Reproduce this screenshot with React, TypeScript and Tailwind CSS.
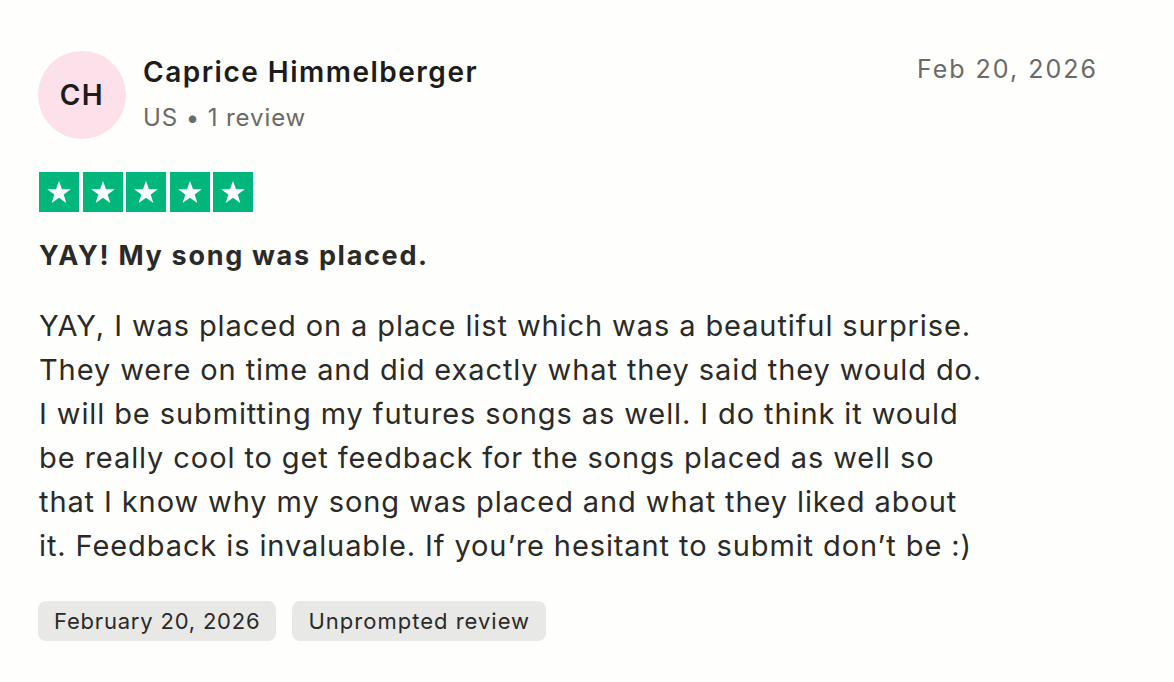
import React from "react";

const Star = () => (
  <div className="w-[40px] h-[40px] bg-[#00b67a] flex items-center justify-center">
    <svg viewBox="0 0 24 24" className="w-[28px] h-[28px]" fill="#fff">
      <path d="M12 2.5l2.6 7.1h7.5l-6.1 4.5 2.3 7.3L12 16.9l-6.3 4.5 2.3-7.3-6.1-4.5h7.5z" />
    </svg>
  </div>
);

const lines = [
  "YAY, I was placed on a place list which was a beautiful surprise.",
  "They were on time and did exactly what they said they would do.",
  "I will be submitting my futures songs as well. I do think it would",
  "be really cool to get feedback for the songs placed as well so",
  "that I know why my song was placed and what they liked about",
  "it. Feedback is invaluable. If you\u2019re hesitant to submit don\u2019t be :)",
];

export default function App() {
  return (
    <div
      className="w-[1174px] h-[682px] bg-[#fefefd] text-[#2a2a28] px-[38px] pt-[51px]"
      style={{ fontFamily: "Inter, 'Liberation Sans', sans-serif" }}
    >
      <div className="flex items-start justify-between">
        <div className="flex items-center gap-[17px]">
          <div className="w-[88px] h-[88px] rounded-full bg-[#fde1ea] flex items-center justify-center text-[28px] font-semibold tracking-[1.5px] text-[#1c1c1c]">
            CH
          </div>
          <div className="flex flex-col">
            <div className="text-[28px] font-semibold leading-[34px] tracking-[1.5px] text-[#1c1c1c]">
              Caprice Himmelberger
            </div>
            <div className="text-[24px] leading-[36px] tracking-[0.9px] text-[#6b6a66] mt-[11px]">
              US • 1 review
            </div>
          </div>
        </div>
        <div className="text-[25px] leading-[36px] text-[#6b6a66] tracking-[2px] mr-[38px]">
          Feb 20, 2026
        </div>
      </div>

      <div className="flex gap-[3.5px] mt-[33px] ml-[1px]">
        <Star />
        <Star />
        <Star />
        <Star />
        <Star />
      </div>

      <div className="mt-[24px] ml-[1px] text-[27px] font-bold leading-[40px] tracking-[1.7px] text-[#2a2a28]">
        YAY! My song was placed.
      </div>

      <div className="mt-[28px] ml-[1px] text-[29px] leading-[44px] tracking-[0.9px] text-[#2a2a28]">
        {lines.map((l, i) => (
          <div key={i} className="whitespace-nowrap">
            {l}
          </div>
        ))}
      </div>

      <div className="flex gap-[16px] mt-[33px]">
        <div className="h-[40px] px-[16px] rounded-[8px] bg-[#e8e8e6] flex items-center text-[22px] tracking-[0.8px] text-[#2a2a28]">
          February 20, 2026
        </div>
        <div className="h-[40px] px-[16px] rounded-[8px] bg-[#e8e8e6] flex items-center text-[22px] tracking-[1px] text-[#2a2a28]">
          Unprompted review
        </div>
      </div>
    </div>
  );
}
